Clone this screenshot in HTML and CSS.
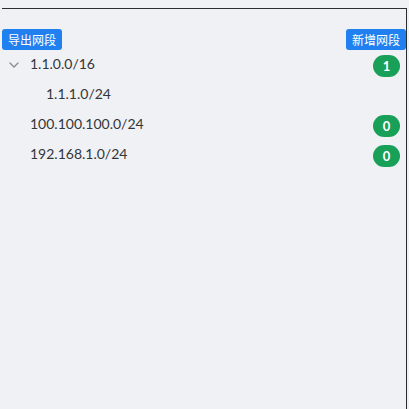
FILE: index.html
```html
<!DOCTYPE html>
<html>
<head>
<meta charset="utf-8">
<link rel="stylesheet" href="styles.css">
</head>
<body>
<div class="panel">
  <div class="toolbar">
    <button class="btn">导出网段</button>
    <button class="btn">新增网段</button>
  </div>
  <div class="tree">
    <div class="row">
      <span class="switcher"><svg width="10" height="6" viewBox="0 0 10 6"><path d="M1 1 L5 5 L9 1" fill="none" stroke="#8a8c91" stroke-width="1.4" stroke-linecap="round" stroke-linejoin="round"/></svg></span>
      <span class="label">1.1.0.0/16</span>
      <span class="badge">1</span>
    </div>
    <div class="row child">
      <span class="switcher"></span>
      <span class="label">1.1.1.0/24</span>
    </div>
    <div class="row">
      <span class="switcher"></span>
      <span class="label">100.100.100.0/24</span>
      <span class="badge">0</span>
    </div>
    <div class="row">
      <span class="switcher"></span>
      <span class="label">192.168.1.0/24</span>
      <span class="badge">0</span>
    </div>
  </div>
</div>
</body>
</html>
```

FILE: styles.css
```css
html, body {
  margin: 0;
  padding: 0;
  height: 100%;
  background: #f0f1f5;
}
body {
  font-family: Lato, "Noto Sans CJK SC", sans-serif;
}
.panel {
  box-sizing: border-box;
  margin: 8px 2px 0 2px;
  height: calc(100% - 8px);
  border-top: 1px solid #2b2d30;
  border-right: 1px solid #2b2d30;
}
.toolbar {
  display: flex;
  justify-content: space-between;
  padding-top: 20px;
}
.btn {
  height: 21px;
  padding: 0 6px;
  border: none;
  border-radius: 3px;
  background: #2080f0;
  color: #fff;
  font-family: "Noto Sans CJK SC", sans-serif;
  font-size: 12px;
  line-height: 21px;
}
.tree {
  display: flex;
  flex-direction: column;
}
.row {
  display: flex;
  align-items: center;
  height: 30px;
  padding: 0 5px 0 2px;
}
.row.child {
  padding-left: 18px;
}
.switcher {
  width: 20px;
  height: 20px;
  display: flex;
  align-items: center;
  justify-content: center;
  margin-right: 6px;
}
.label {
  flex: 1;
  font-size: 14px;
  color: #333639;
  line-height: 20px;
  margin-top: -2px;
}
.badge {
  min-width: 27px;
  height: 22px;
  border-radius: 11px;
  background: #18a058;
  color: #fff;
  font-size: 13px;
  font-weight: bold;
  display: flex;
  align-items: center;
  justify-content: center;
  margin-top: 2px;
  margin-right: 1px;
}
```
